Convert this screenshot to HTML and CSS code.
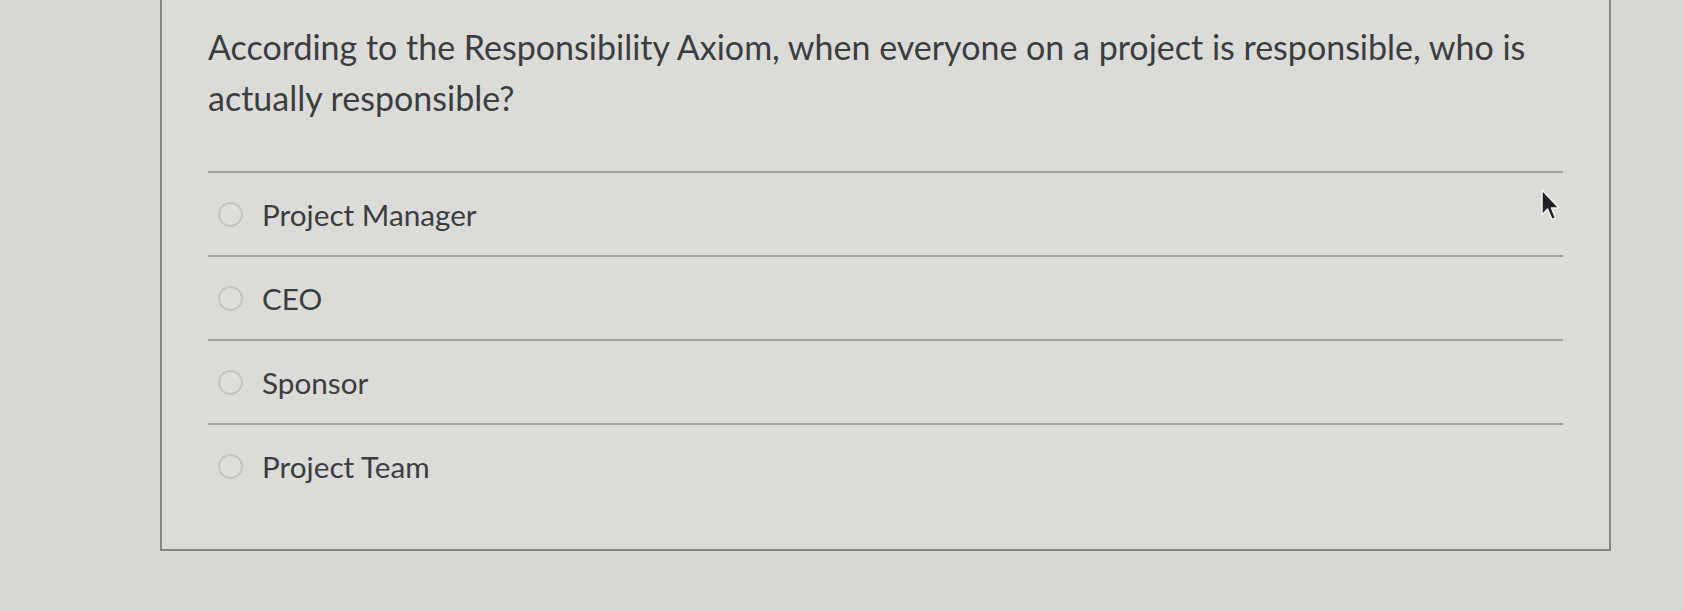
FILE: index.html
```html
<!doctype html>
<html>
<head>
    <meta charset="UTF-8">
    <title>Quiz Question</title>
    <link rel="stylesheet" href="styles.css">
</head>
<body>
    <div class="question">
        <p class="question-text">According to the Responsibility Axiom, when everyone on a project is responsible, who is actually responsible?</p>
        <div class="answers">
            <label class="answer"><span class="radio"></span>Project Manager</label>
            <label class="answer"><span class="radio"></span>CEO</label>
            <label class="answer"><span class="radio"></span>Sponsor</label>
            <label class="answer"><span class="radio"></span>Project Team</label>
        </div>
        <!-- mouse pointer -->
        <svg class="cursor" width="20" height="34" viewBox="0 0 20 34">
            <path d="M1 1 L1 26 L6.5 20 L11 30.5 L14.5 29 L10.5 19 L18 19 Z" fill="#1f2326" stroke="#f2f2f2" stroke-width="1.5" stroke-linejoin="round"/>
        </svg>
    </div>
</body>
</html>
```

FILE: styles.css
```css
body {
    margin: 0;
    background-color: #d7d7d4;
    font-family: Lato, "Open Sans", sans-serif;
    color: #3b3e41;
}
.question {
    position: relative;
    width: 1355px;
    margin-left: 160px;
    padding: 21px 46px 42px 46px;
    background-color: #dbdbd8;
    border: 2px solid #858585;
    border-top: none;
}
.question-text {
    margin: 0 0 48px 0;
    font-size: 34px;
    line-height: 51px;
}
.answer {
    display: flex;
    align-items: center;
    height: 82px;
    border-top: 2px solid #a3a3a1;
    font-size: 29.7px;
}
.radio {
    width: 21px;
    height: 21px;
    margin: 0 19px 0 10px;
    border: 2px solid #c4c4c2;
    border-radius: 50%;
    background-color: #dededb;
}
.cursor {
    position: absolute;
    left: 1379px;
    top: 189px;
}
```
